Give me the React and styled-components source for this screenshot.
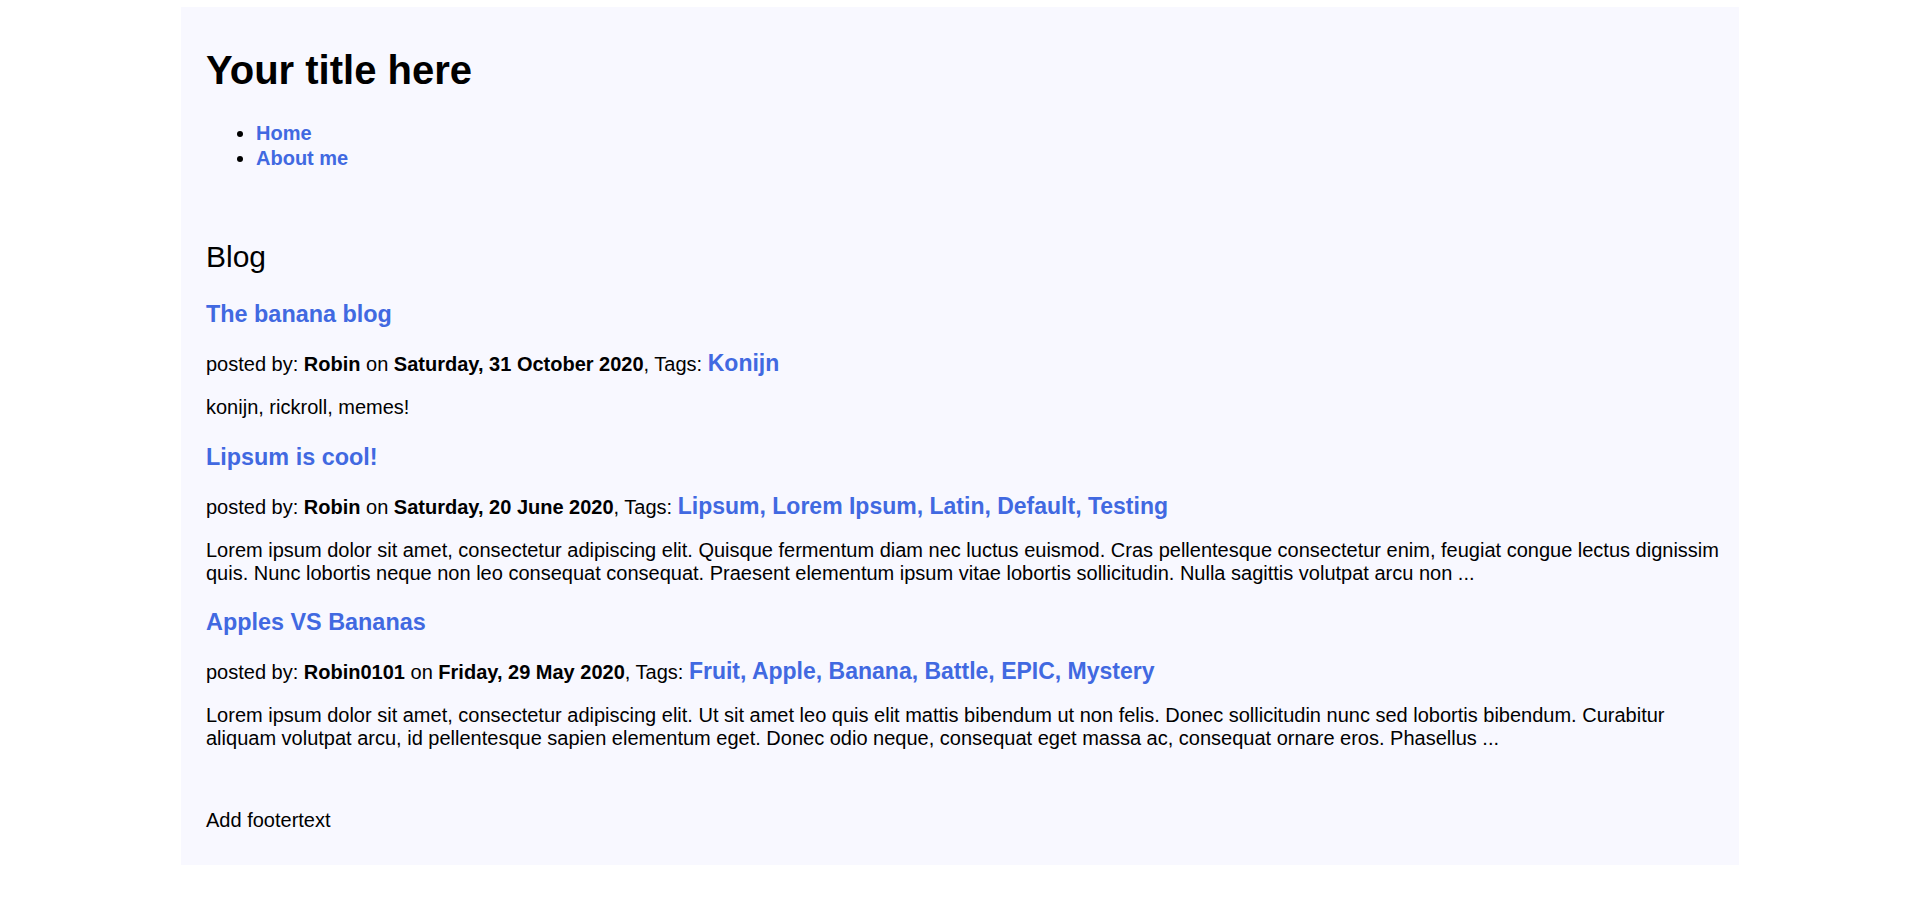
import React from "react";
import styled, { createGlobalStyle } from "styled-components";

const GlobalStyle = createGlobalStyle`
  html, body {
    margin: 0;
    padding: 0;
    background: #ffffff;
  }
  body {
    font-family: "Liberation Sans", Arial, sans-serif;
    font-size: 20px;
    color: #000000;
  }
`;

const Page = styled.div`
  box-sizing: border-box;
  width: 1558px;
  margin: 7px auto 0;
  padding: 12px 15px 13px 25px;
  background: #f8f8ff;
`;

const Header = styled.header`
  padding-bottom: 25px;
`;

const Title = styled.h1`
  font-size: 40px;
  font-weight: bold;
  margin: 28px 0 28px;
  line-height: 46px;
`;

const NavList = styled.ul`
  margin: 0 0 20px;
  padding-left: 50px;
  list-style: disc;
  line-height: 24.5px;
`;

const NavLink = styled.a`
  color: #4169e1;
  font-weight: bold;
  text-decoration: none;
`;

const Main = styled.main``;

const SectionTitle = styled.h2`
  font-size: 30px;
  font-weight: normal;
  margin: 25px 0 27px;
  line-height: 34px;
`;

const Post = styled.article``;

const PostTitle = styled.h3`
  font-size: 23.4px;
  font-weight: bold;
  margin: 24.5px 0 24px;
  line-height: 27px;
`;

const PostLink = styled.a`
  color: #4169e1;
  text-decoration: none;
`;

const Text = styled.p`
  margin: 20px 0;
  line-height: 23px;
`;

const Strong = styled.b`
  font-weight: bold;
`;

const TagLink = styled.a`
  color: #4169e1;
  font-weight: bold;
  font-size: 23px;
  line-height: 23px;
  text-decoration: none;
`;

const Footer = styled.footer`
  padding-top: 19px;
`;

const posts = [
  {
    title: "The banana blog",
    author: "Robin",
    date: "Saturday, 31 October 2020",
    tags: "Konijn",
    body: "konijn, rickroll, memes!",
  },
  {
    title: "Lipsum is cool!",
    author: "Robin",
    date: "Saturday, 20 June 2020",
    tags: "Lipsum, Lorem Ipsum, Latin, Default, Testing",
    body:
      "Lorem ipsum dolor sit amet, consectetur adipiscing elit. Quisque fermentum diam nec luctus euismod. Cras pellentesque consectetur enim, feugiat congue lectus dignissim quis. Nunc lobortis neque non leo consequat consequat. Praesent elementum ipsum vitae lobortis sollicitudin. Nulla sagittis volutpat arcu non ...",
  },
  {
    title: "Apples VS Bananas",
    author: "Robin0101",
    date: "Friday, 29 May 2020",
    tags: "Fruit, Apple, Banana, Battle, EPIC, Mystery",
    body:
      "Lorem ipsum dolor sit amet, consectetur adipiscing elit. Ut sit amet leo quis elit mattis bibendum ut non felis. Donec sollicitudin nunc sed lobortis bibendum. Curabitur aliquam volutpat arcu, id pellentesque sapien elementum eget. Donec odio neque, consequat eget massa ac, consequat ornare eros. Phasellus ...",
  },
];

export default function App() {
  return (
    <>
      <GlobalStyle />
      <Page>
        <Header>
          <Title>Your title here</Title>
          <nav>
            <NavList>
              <li>
                <NavLink href="#">Home</NavLink>
              </li>
              <li>
                <NavLink href="#">About me</NavLink>
              </li>
            </NavList>
          </nav>
        </Header>
        <Main>
          <SectionTitle>Blog</SectionTitle>
          {posts.map((p) => (
            <Post key={p.title}>
              <PostTitle>
                <PostLink href="#">{p.title}</PostLink>
              </PostTitle>
              <Text>
                posted by: <Strong>{p.author}</Strong> on <Strong>{p.date}</Strong>, Tags:{" "}
                <TagLink href="#">{p.tags}</TagLink>
              </Text>
              <Text>{p.body}</Text>
            </Post>
          ))}
        </Main>
        <Footer>
          <Text>Add footertext</Text>
        </Footer>
      </Page>
    </>
  );
}
